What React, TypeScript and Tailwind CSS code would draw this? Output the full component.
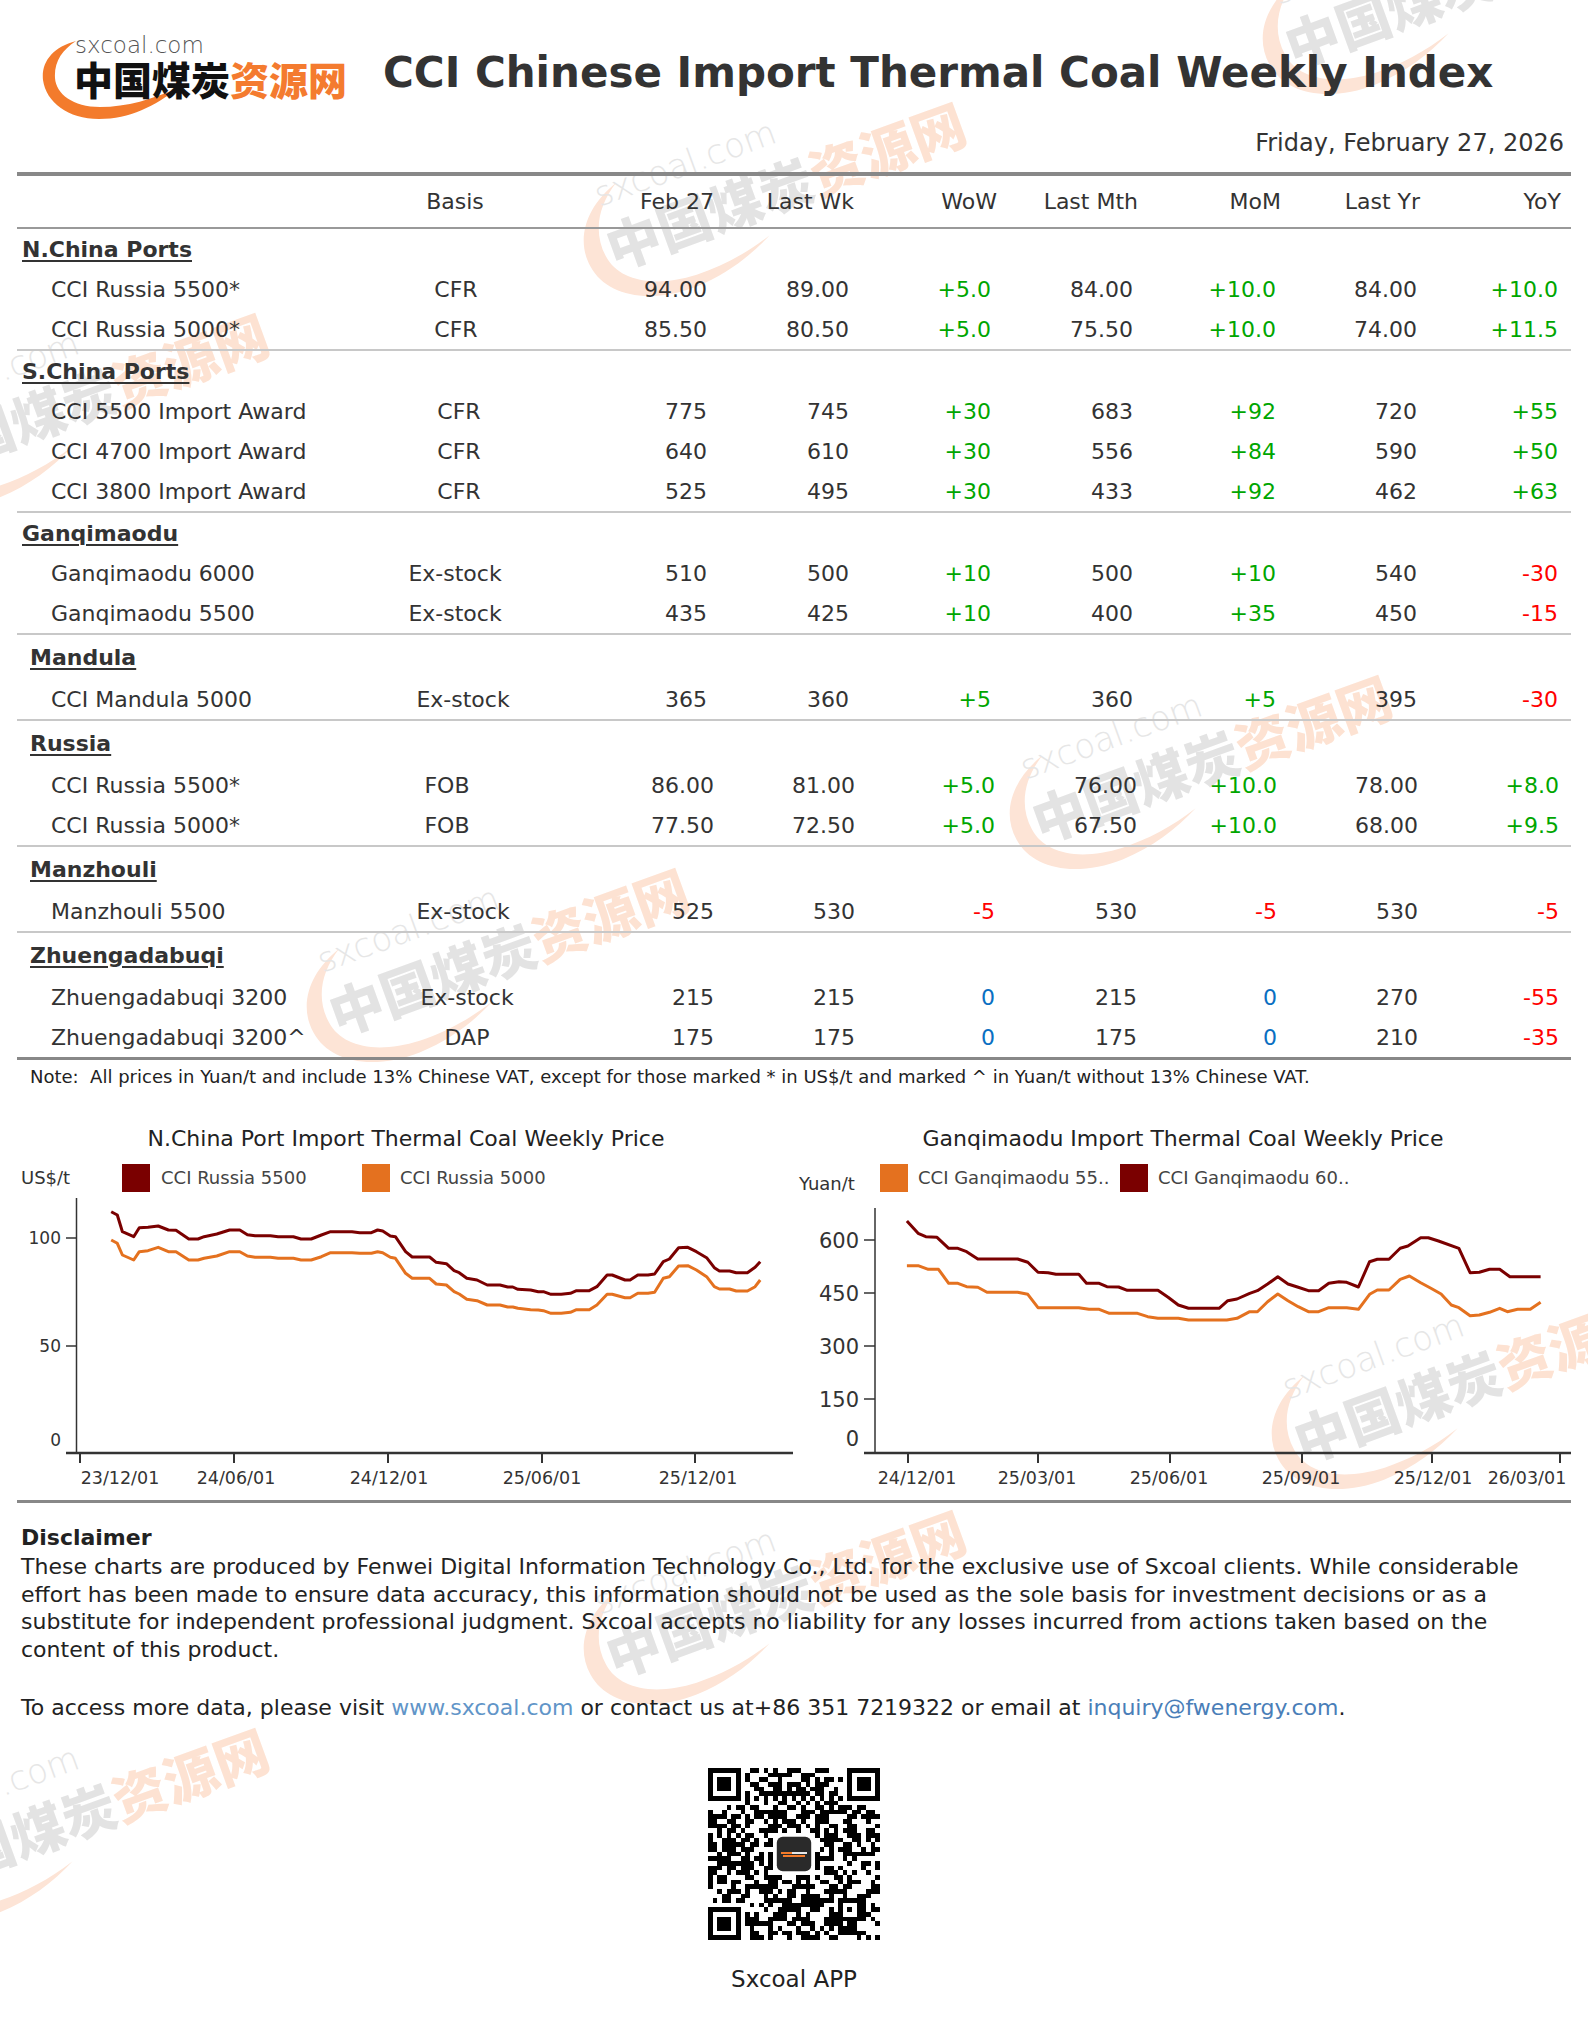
import React from 'react';

type Row = string[];
type Section = {
  title: string;
  tall: boolean;
  cols: 'A' | 'B';
  basis: string;
  last?: boolean;
  rows: Row[];
};

const colsA = 'grid grid-cols-[363px_150px_177px_142px_142px_142px_143px_141px_141px]';
const colsB = 'grid grid-cols-[363px_150px_184px_141px_140px_142px_140px_141px_141px]';
const colsHead = 'grid grid-cols-[363px_150px_184px_140px_143px_141px_143px_139px_141px]';

const sections: Section[] = [
  {
    title: 'N.China Ports', tall: false, cols: 'A', basis: 'pl-[2px]',
    rows: [
      ['CCI Russia 5500*', 'CFR', '94.00', '89.00', '+5.0', '84.00', '+10.0', '84.00', '+10.0'],
      ['CCI Russia 5000*', 'CFR', '85.50', '80.50', '+5.0', '75.50', '+10.0', '74.00', '+11.5'],
    ],
  },
  {
    title: 'S.China Ports', tall: false, cols: 'A', basis: 'pl-[8px]',
    rows: [
      ['CCI 5500 Import Award', 'CFR', '775', '745', '+30', '683', '+92', '720', '+55'],
      ['CCI 4700 Import Award', 'CFR', '640', '610', '+30', '556', '+84', '590', '+50'],
      ['CCI 3800 Import Award', 'CFR', '525', '495', '+30', '433', '+92', '462', '+63'],
    ],
  },
  {
    title: 'Ganqimaodu', tall: false, cols: 'A', basis: 'pl-[0px]',
    rows: [
      ['Ganqimaodu 6000', 'Ex-stock', '510', '500', '+10', '500', '+10', '540', '-30'],
      ['Ganqimaodu 5500', 'Ex-stock', '435', '425', '+10', '400', '+35', '450', '-15'],
    ],
  },
  {
    title: 'Mandula', tall: true, cols: 'A', basis: 'pl-[16px]',
    rows: [['CCI Mandula 5000', 'Ex-stock', '365', '360', '+5', '360', '+5', '395', '-30']],
  },
  {
    title: 'Russia', tall: true, cols: 'B', basis: 'pr-[16px]',
    rows: [
      ['CCI Russia 5500*', 'FOB', '86.00', '81.00', '+5.0', '76.00', '+10.0', '78.00', '+8.0'],
      ['CCI Russia 5000*', 'FOB', '77.50', '72.50', '+5.0', '67.50', '+10.0', '68.00', '+9.5'],
    ],
  },
  {
    title: 'Manzhouli', tall: true, cols: 'B', basis: 'pl-[16px]',
    rows: [['Manzhouli 5500', 'Ex-stock', '525', '530', '-5', '530', '-5', '530', '-5']],
  },
  {
    title: 'Zhuengadabuqi', tall: true, cols: 'B', basis: 'pl-[24px]', last: true,
    rows: [
      ['Zhuengadabuqi 3200', 'Ex-stock', '215', '215', '0', '215', '0', '270', '-55'],
      ['Zhuengadabuqi 3200^', 'DAP', '175', '175', '0', '175', '0', '210', '-35'],
    ],
  },
];

function changeColor(v: string) {
  if (v.startsWith('+')) return 'text-[#00a600]';
  if (v.startsWith('-')) return 'text-[#ff0000]';
  return 'text-[#0a6fc2]';
}

function TableSection({ s }: { s: Section }) {
  const cols = s.cols === 'A' ? colsA : colsB;
  return (
    <div className={s.last ? 'border-b-[3px] border-[#888]' : 'border-b-2 border-[#c8c8c8]'}>
      <div className={s.tall ? 'flex h-[44px] items-center pl-[13px]' : 'flex h-[40px] items-center pl-[5px]'}>
        <span className="font-bold underline decoration-2 underline-offset-[3px]">{s.title}</span>
      </div>
      {s.rows.map((r) => (
        <div key={r[0]} className={`${cols} h-[40px] items-center`}>
          <div className="whitespace-nowrap pl-[34px]">{r[0]}</div>
          <div className={`text-center ${s.basis}`}>{r[1]}</div>
          {r.slice(2).map((v, i) => (
            <div key={i} className={`text-right ${i >= 2 && i % 2 === 0 ? changeColor(v) : ''}`}>
              {v}
            </div>
          ))}
        </div>
      ))}
    </div>
  );
}

// traced from the reference, in zoom coordinates
const c1Dark: [number, number][] = [
  [218, 455], [230, 465], [240, 515], [262, 530], [273, 503], [290, 502], [310, 498], [330, 510], [345, 511],
  [370, 537], [388, 537], [400, 530], [425, 522], [450, 510], [470, 510], [485, 524], [500, 527], [530, 527],
  [545, 530], [575, 530], [590, 537], [610, 537], [630, 525], [648, 515], [690, 515], [705, 518], [728, 518],
  [740, 510], [750, 513], [765, 528], [775, 530], [795, 575], [808, 591], [842, 591], [855, 607], [875, 611],
  [890, 632], [900, 638], [915, 655], [935, 660], [955, 675], [980, 675], [995, 681], [1005, 681], [1015, 688],
  [1040, 690], [1055, 695], [1065, 695], [1080, 703], [1100, 703], [1118, 700], [1130, 692], [1155, 692],
  [1170, 680], [1190, 645], [1200, 645], [1225, 660], [1235, 660], [1250, 645], [1270, 645], [1283, 642],
  [1300, 605], [1312, 597], [1330, 563], [1348, 562], [1365, 575], [1385, 593], [1400, 623], [1410, 633],
  [1430, 633], [1443, 638], [1465, 638], [1480, 622], [1490, 605],
];
const c1Orange: [number, number][] = [
  [218, 540], [230, 550], [240, 585], [262, 600], [273, 575], [290, 572], [310, 562], [330, 575], [345, 575],
  [370, 600], [388, 600], [400, 595], [425, 588], [450, 575], [470, 575], [485, 588], [500, 592], [530, 592],
  [545, 595], [575, 595], [590, 600], [610, 600], [630, 590], [648, 578], [690, 578], [705, 580], [728, 580],
  [740, 575], [750, 578], [765, 592], [775, 595], [795, 640], [808, 655], [842, 655], [855, 672], [875, 675],
  [890, 695], [900, 702], [915, 718], [935, 722], [955, 735], [980, 735], [995, 741], [1005, 741], [1015, 745],
  [1040, 749], [1055, 750], [1065, 752], [1080, 760], [1100, 760], [1118, 757], [1130, 749], [1155, 749],
  [1170, 735], [1190, 703], [1200, 703], [1225, 713], [1235, 713], [1250, 700], [1270, 700], [1283, 697],
  [1300, 655], [1312, 650], [1330, 618], [1348, 617], [1365, 630], [1385, 650], [1400, 680], [1410, 687],
  [1430, 687], [1443, 693], [1465, 693], [1480, 680], [1490, 660],
];
const c2Dark: [number, number][] = [
  [233, 483], [255, 520], [270, 530], [292, 532], [315, 565], [333, 565], [350, 575], [372, 597], [450, 597],
  [470, 607], [490, 637], [510, 638], [525, 643], [570, 643], [585, 670], [610, 670], [625, 680], [648, 681],
  [665, 691], [725, 691], [745, 712], [765, 735], [785, 745], [845, 745], [862, 722], [880, 717], [905, 700],
  [920, 692], [940, 672], [960, 650], [980, 672], [1000, 682], [1020, 692], [1040, 692], [1060, 670],
  [1080, 665], [1095, 667], [1118, 681], [1140, 605], [1155, 598], [1178, 598], [1200, 565], [1215, 558],
  [1240, 533], [1255, 533], [1275, 543], [1315, 565], [1337, 638], [1355, 637], [1375, 628], [1395, 628],
  [1415, 650], [1475, 650],
];
const c2Orange: [number, number][] = [
  [233, 617], [255, 617], [275, 628], [295, 628], [315, 670], [333, 670], [350, 680], [372, 682], [390, 697],
  [450, 697], [470, 703], [490, 743], [570, 743], [590, 748], [610, 748], [630, 760], [685, 760], [705, 770],
  [725, 775], [765, 775], [785, 780], [860, 780], [880, 775], [905, 755], [920, 755], [940, 725], [960, 702],
  [980, 722], [1000, 740], [1020, 755], [1040, 755], [1060, 743], [1095, 743], [1118, 748], [1140, 703],
  [1155, 690], [1178, 690], [1200, 658], [1218, 648], [1240, 668], [1260, 685], [1280, 702], [1300, 735],
  [1315, 743], [1337, 767], [1355, 765], [1375, 757], [1395, 745], [1410, 755], [1430, 748], [1455, 748],
  [1475, 727],
];

function pts(list: [number, number][], x0: number) {
  return list.map(([x, y]) => `${(x / 1.96 + x0).toFixed(1)},${(y / 3 + 1060).toFixed(1)}`).join(' ');
}

function ChartOne() {
  const xt = [80, 234, 388, 542, 695];
  const xl = [
    ['23/12/01', 120], ['24/06/01', 236], ['24/12/01', 389], ['25/06/01', 542], ['25/12/01', 698],
  ] as const;
  return (
    <svg width={778} height={347} viewBox="17 1153 778 347" className="block">
      <text x={21} y={1184} fontSize={18} fill="#333">US$/t</text>
      <rect x={122} y={1164} width={28} height={28} fill="#7a0000" />
      <text x={161} y={1184} fontSize={18} fill="#444">CCI Russia 5500</text>
      <rect x={362} y={1164} width={28} height={28} fill="#e4711f" />
      <text x={400} y={1184} fontSize={18} fill="#444">CCI Russia 5000</text>
      <line x1={76.5} y1={1198} x2={76.5} y2={1453} stroke="#333" strokeWidth={1.5} />
      <line x1={66} y1={1453} x2={793} y2={1453} stroke="#333" strokeWidth={2.5} />
      {[
        ['100', 1238],
        ['50', 1346],
      ].map(([t, y]) => (
        <g key={t}>
          <line x1={66} y1={Number(y)} x2={76} y2={Number(y)} stroke="#333" strokeWidth={1.5} />
          <text x={61} y={Number(y) + 6} fontSize={17} textAnchor="end" fill="#333">{t}</text>
        </g>
      ))}
      <text x={61} y={1446} fontSize={17} textAnchor="end" fill="#333">0</text>
      {xt.map((x) => (
        <line key={x} x1={x} y1={1454} x2={x} y2={1463} stroke="#333" strokeWidth={2} />
      ))}
      {xl.map(([t, x]) => (
        <text key={t} x={x} y={1484} fontSize={17.5} textAnchor="middle" fill="#333">{t}</text>
      ))}
      <polyline points={pts(c1Orange, 0)} fill="none" stroke="#e4711f" strokeWidth={3} strokeLinejoin="round" />
      <polyline points={pts(c1Dark, 0)} fill="none" stroke="#7a0000" strokeWidth={3} strokeLinejoin="round" />
    </svg>
  );
}

function ChartTwo() {
  const xt = [908, 1038, 1170, 1302, 1432, 1560];
  const xl = [
    ['24/12/01', 917], ['25/03/01', 1037], ['25/06/01', 1169], ['25/09/01', 1301], ['25/12/01', 1433], ['26/03/01', 1527],
  ] as const;
  const yt = [
    ['600', 1240], ['450', 1293], ['300', 1346], ['150', 1399],
  ] as const;
  return (
    <svg width={776} height={347} viewBox="795 1153 776 347" className="block">
      <text x={799} y={1190} fontSize={18} fill="#333">Yuan/t</text>
      <rect x={880} y={1164} width={28} height={28} fill="#e4711f" />
      <text x={918} y={1184} fontSize={18} fill="#444">CCI Ganqimaodu 55..</text>
      <rect x={1120} y={1164} width={28} height={28} fill="#7a0000" />
      <text x={1158} y={1184} fontSize={18} fill="#444">CCI Ganqimaodu 60..</text>
      <line x1={875} y1={1208} x2={875} y2={1453} stroke="#333" strokeWidth={1.5} />
      <line x1={864} y1={1453} x2={1572} y2={1453} stroke="#333" strokeWidth={2.5} />
      {yt.map(([t, y]) => (
        <g key={t}>
          <line x1={864} y1={y} x2={875} y2={y} stroke="#333" strokeWidth={1.5} />
          <text x={859} y={y + 7.5} fontSize={21} textAnchor="end" fill="#333">{t}</text>
        </g>
      ))}
      <text x={859} y={1445.5} fontSize={21} textAnchor="end" fill="#333">0</text>
      {xt.map((x) => (
        <line key={x} x1={x} y1={1454} x2={x} y2={1463} stroke="#333" strokeWidth={2} />
      ))}
      {xl.map(([t, x]) => (
        <text key={t} x={x} y={1484} fontSize={17.5} textAnchor="middle" fill="#333">{t}</text>
      ))}
      <polyline points={pts(c2Orange, 788)} fill="none" stroke="#e4711f" strokeWidth={3} strokeLinejoin="round" />
      <polyline points={pts(c2Dark, 788)} fill="none" stroke="#7a0000" strokeWidth={3} strokeLinejoin="round" />
    </svg>
  );
}

function buildQR() {
  const N = 37;
  let seed = 20260227;
  const rnd = () => {
    seed = (Math.imul(seed, 1664525) + 1013904223) >>> 0;
    return seed / 4294967296;
  };
  const m = Array.from({ length: N }, () => Array.from({ length: N }, () => (rnd() < 0.52 ? 1 : 0)));
  const finder = (r0: number, c0: number) => {
    for (let r = -1; r <= 7; r++) {
      for (let c = -1; c <= 7; c++) {
        const rr = r0 + r;
        const cc = c0 + c;
        if (rr < 0 || cc < 0 || rr >= N || cc >= N) continue;
        const inside = r >= 0 && r <= 6 && c >= 0 && c <= 6;
        const dark = inside && (r === 0 || r === 6 || c === 0 || c === 6 || (r >= 2 && r <= 4 && c >= 2 && c <= 4));
        m[rr][cc] = dark ? 1 : 0;
      }
    }
  };
  finder(0, 0);
  finder(0, N - 7);
  finder(N - 7, 0);
  for (let i = 8; i < N - 8; i++) {
    m[6][i] = i % 2 === 0 ? 1 : 0;
    m[i][6] = i % 2 === 0 ? 1 : 0;
  }
  for (let r = 28; r <= 32; r++) {
    for (let c = 28; c <= 32; c++) {
      m[r][c] = Math.max(Math.abs(r - 30), Math.abs(c - 30)) === 1 ? 0 : 1;
    }
  }
  for (let r = 14; r <= 22; r++) for (let c = 14; c <= 22; c++) m[r][c] = 0;
  return m;
}

const qr = buildQR();

function QRCode() {
  return (
    <svg width={172} height={172} viewBox="0 0 37 37" shapeRendering="crispEdges" className="block">
      <rect width={37} height={37} fill="#fff" />
      {qr.map((row, r) =>
        row.map((v, c) => (v ? <rect key={`${r}-${c}`} x={c} y={r} width={1} height={1} fill="#000" /> : null)),
      )}
      <rect x={14.8} y={14.8} width={7.4} height={7.4} rx={1.3} fill="#2a2a2a" shapeRendering="geometricPrecision" />
      <rect x={15.6} y={18.1} width={2.4} height={0.5} fill="#f47b2a" />
      <rect x={18.1} y={18.1} width={3.3} height={0.5} fill="#e8e8e8" />
      <rect x={16.2} y={18.8} width={4.6} height={0.25} fill="#f47b2a" />
    </svg>
  );
}

function Watermark({ pos }: { pos: string }) {
  return (
    <div className={`pointer-events-none absolute ${pos} h-[150px] w-[440px] rotate-[-20deg]`}>
      <svg className="absolute left-0 top-0" width={200} height={150} viewBox="0 0 200 150">
        <path
          d="M62,16 C26,28 4,55 9,86 C14,120 52,142 102,141 C134,140 162,131 188,118 C160,127 132,131 106,130 C62,128 31,110 27,82 C23,56 36,32 62,16 Z"
          fill="#fde4d6"
        />
      </svg>
      <div className="absolute left-[38px] top-[4px] whitespace-nowrap text-[34px] font-light leading-none text-[#e6e6e6]">
        sxcoal.com
      </div>
      <div className="absolute left-[31px] top-[48px] whitespace-nowrap font-['Noto_Sans_CJK_SC',sans-serif] text-[54px] font-black leading-[54px]">
        <span className="text-[#e3e3e3]">中国煤炭</span>
        <span className="text-[#fde2d2]">资源网</span>
      </div>
    </div>
  );
}

function Logo() {
  return (
    <div className="relative h-[88px] w-[305px] shrink-0">
      <svg className="absolute left-0 top-0" width={305} height={88} viewBox="0 0 305 88">
        <path
          d="M34,9 C11,15 -1,30 1,48 C4,70 26,87 57,87 C88,87 113,74 136,56 C111,67 85,75 58,75 C31,75 14,62 13,46 C12,30 20,18 34,9 Z"
          fill="#f37b2c"
        />
      </svg>
      <div className="absolute left-[33px] top-[2px] text-[23px] font-light leading-none text-[#555]">sxcoal.com</div>
      <div className="absolute left-[32px] top-[27px] whitespace-nowrap font-['Noto_Sans_CJK_SC',sans-serif] text-[39px] font-black leading-[39px]">
        <span className="text-[#111]">中国煤炭</span>
        <span className="text-[#f47b2f]">资源网</span>
      </div>
    </div>
  );
}

export default function App() {
  const heads = ['Feb 27', 'Last Wk', 'WoW', 'Last Mth', 'MoM', 'Last Yr', 'YoY'];
  return (
    <div className="relative min-h-[2020px] w-full overflow-hidden bg-white font-['DejaVu_Sans',sans-serif] text-[22px] text-[#333]">
      <Watermark pos="left-[1244px] top-[-93px]" />
      <Watermark pos="left-[565px] top-[109px]" />
      <Watermark pos="left-[-132px] top-[320px]" />
      <Watermark pos="left-[991px] top-[682px]" />
      <Watermark pos="left-[288px] top-[875px]" />
      <Watermark pos="left-[1253px] top-[1302px]" />
      <Watermark pos="left-[565px] top-[1517px]" />
      <Watermark pos="left-[-132px] top-[1735px]" />

      <div className="relative z-10 px-[17px]">
        <header>
          <div className="flex items-start pl-[25px] pt-[32px]">
            <Logo />
            <h1 className="ml-[36px] mt-[16px] whitespace-nowrap text-[42px] font-bold leading-[50px] text-[#333]">
              CCI Chinese Import Thermal Coal Weekly Index
            </h1>
          </div>
          <div className="mt-[8px] pr-[7px] text-right text-[24px] leading-[30px] text-[#333]">
            Friday, February 27, 2026
          </div>
        </header>

        <section className="mt-[14px] border-t-4 border-[#888]">
          <div className={`${colsHead} h-[53px] items-center border-b-2 border-[#999]`}>
            <div />
            <div className="text-center">Basis</div>
            {heads.map((h) => (
              <div key={h} className="text-right">{h}</div>
            ))}
          </div>
          {sections.map((s) => (
            <TableSection key={s.title} s={s} />
          ))}
          <p className="whitespace-pre pl-[13px] pt-[5px] text-[18px] leading-[24px] text-[#222]">
            {'Note:  All prices in Yuan/t and include 13% Chinese VAT, except for those marked * in US$/t and marked ^ in Yuan/t without 13% Chinese VAT.'}
          </p>
        </section>

        <section className="flex border-b-[3px] border-[#888]">
          <div className="w-[778px]">
            <h2 className="mt-[36px] text-center text-[22px] leading-[28px] text-[#222]">
              N.China Port Import Thermal Coal Weekly Price
            </h2>
            <ChartOne />
          </div>
          <div className="w-[776px]">
            <h2 className="mt-[36px] text-center text-[22px] leading-[28px] text-[#222]">
              Ganqimaodu Import Thermal Coal Weekly Price
            </h2>
            <ChartTwo />
          </div>
        </section>

        <section className="pl-[4px] text-[#222]">
          <h3 className="mt-[21px] text-[22px] font-bold leading-[28px]">Disclaimer</h3>
          <p className="mt-[1px] whitespace-nowrap text-[22px] leading-[27.5px]">
            These charts are produced by Fenwei Digital Information Technology Co., Ltd. for the exclusive use of Sxcoal clients. While considerable
            <br />
            effort has been made to ensure data accuracy, this information should not be used as the sole basis for investment decisions or as a
            <br />
            substitute for independent professional judgment. Sxcoal accepts no liability for any losses incurred from actions taken based on the
            <br />
            content of this product.
          </p>
          <p className="mt-[31px] whitespace-nowrap text-[22px] leading-[28px]">
            To access more data, please visit <span className="text-[#6195c8]">www.sxcoal.com</span> or contact us at+86 351 7219322 or email at{' '}
            <span className="text-[#4a7eb8]">inquiry@fwenergy.com</span>.
          </p>
        </section>

        <section className="flex flex-col items-center pb-[30px]">
          <div className="mt-[46px]">
            <QRCode />
          </div>
          <div className="mt-[25px] text-[23px] leading-[28px] text-[#222]">Sxcoal APP</div>
        </section>
      </div>
    </div>
  );
}
